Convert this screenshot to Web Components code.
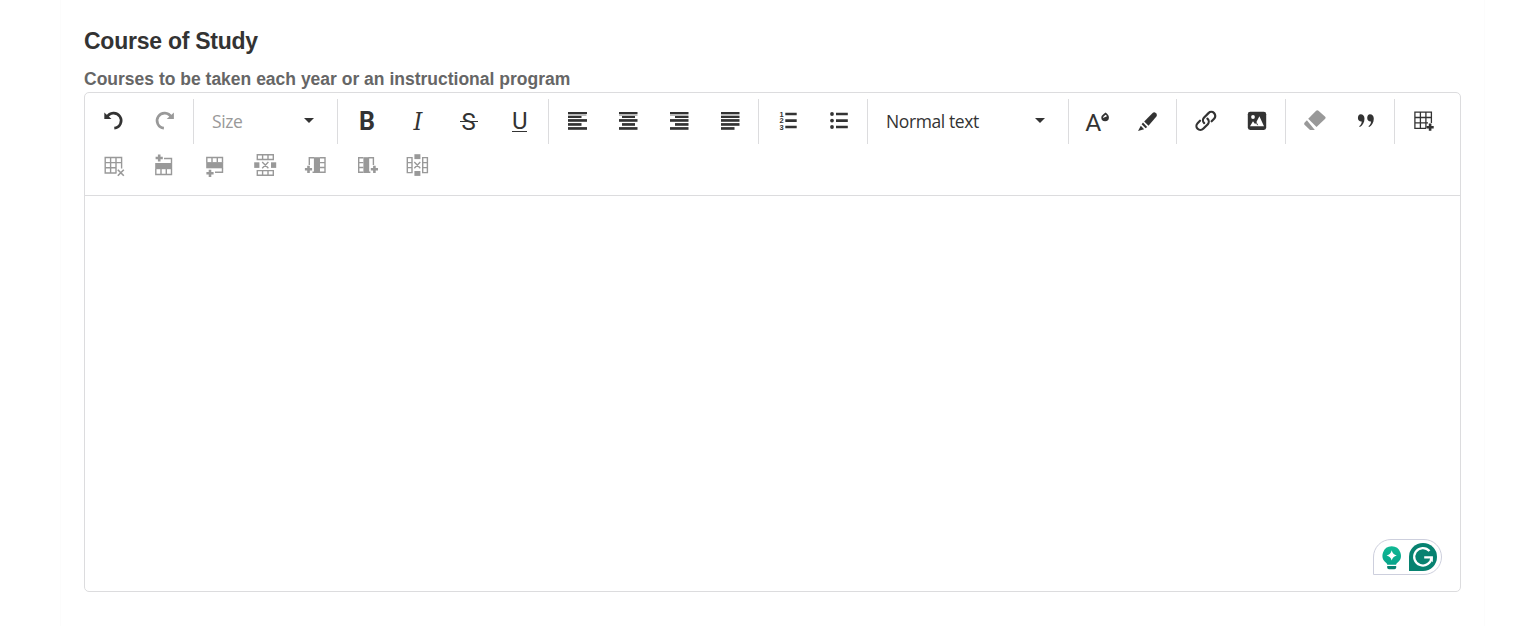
<!DOCTYPE html>
<html lang="en">
<head>
<meta charset="utf-8">
<title>Course of Study</title>
<style>
  body {
    margin: 0;
    background: #fff;
    font-family: "Liberation Sans", Arial, sans-serif;
  }
</style>
</head>
<body>
<editor-field heading="Course of Study" label="Courses to be taken each year or an instructional program">
  <editor-toolbar>
    <tool-group style="width:109px"><tool-button icon="undo"></tool-button><tool-button icon="redo" disabled></tool-button></tool-group>
    <tool-group style="width:144px"><tool-select disabled>Size</tool-select></tool-group>
    <tool-group style="width:211px">
      <tool-button icon="bold"></tool-button><tool-button icon="italic"></tool-button><tool-button icon="strike"></tool-button><tool-button icon="underline"></tool-button>
    </tool-group>
    <tool-group style="width:210px">
      <tool-button icon="left"></tool-button><tool-button icon="center"></tool-button><tool-button icon="right"></tool-button><tool-button icon="justify"></tool-button>
    </tool-group>
    <tool-group style="width:109px"><tool-button icon="ordered"></tool-button><tool-button icon="bullets"></tool-button></tool-group>
    <tool-group style="width:201px"><tool-select>Normal text</tool-select></tool-group>
    <tool-group style="width:108px"><tool-button icon="color"></tool-button><tool-button icon="marker"></tool-button></tool-group>
    <tool-group style="width:109px"><tool-button icon="link"></tool-button><tool-button icon="image"></tool-button></tool-group>
    <tool-group style="width:109px"><tool-button icon="eraser" disabled></tool-button><tool-button icon="quote"></tool-button></tool-group>
    <tool-group last style="width:58px"><tool-button icon="table"></tool-button></tool-group>
    <tool-group last style="width:361px;margin-top:-1px;padding-left:4px">
      <tool-button icon="tableDelete" disabled></tool-button><tool-button icon="rowAbove" disabled></tool-button><tool-button icon="rowBelow" disabled></tool-button><tool-button icon="rowDelete" disabled></tool-button><tool-button icon="colLeft" disabled></tool-button><tool-button icon="colRight" disabled></tool-button><tool-button icon="colDelete" disabled></tool-button>
    </tool-group>
  </editor-toolbar>
  <writing-assistant slot="overlay"></writing-assistant>
</editor-field>

<script>
const bars = (rows) =>
  `<rect x="3" y="5" width="18.5" height="2" fill="#bbb"/>` +
  rows.map(([x, w], i) => {
    const y = [3, 7, 10.1, 14.1, 18.1][i];
    return `<rect x="${x}" y="${y}" width="${w}" height="${i < 2 ? 2 : 2.7}"/>`;
  }).join("");

const plus = (x, y) => `<path d="M${x - 3.6} ${y}h7.2M${x} ${y - 3.6}v7.2" fill="none" stroke="currentColor" stroke-width="2.6"/>`;
const line = (d, w = 1.2) => `<path d="${d}" fill="none" stroke="currentColor" stroke-width="${w}"/>`;
const undo = line("M5 8.2A7.5 7.5 0 1 1 12.3 19.1", 2.6) + `<path d="M2.3 3.4v6.6h7.2z"/>`;

const ICONS = {
  undo,
  redo: `<g transform="matrix(-1 0 0 1 23.2 0)">${undo}</g>`,
  left: bars([[3, 19], [3, 13.5], [3, 19], [3, 13.5], [3, 19]]),
  center: bars([[3, 18.5], [6, 13], [3, 18.5], [6, 13], [3, 18.5]]),
  right: bars([[3, 18.5], [8, 13.5], [3, 18.5], [8, 13.5], [3, 18.5]]),
  justify: bars([[3, 18.5], [3, 18.5], [3, 18.5], [3, 18.5], [3, 13.5]]),
  ordered: line("M9.3 5h11.4M9.3 11.6h11.4M9.3 18h11.4", 2.6) +
    `<g font-family="Liberation Sans" font-weight="700" font-size="7.5"><text x="3.5" y="7.5">1</text><text x="3.5" y="14.2">2</text><text x="3.5" y="21">3</text></g>`,
  bullets: `<circle cx="5" cy="5" r="1.9"/><circle cx="5" cy="11.6" r="1.9"/><circle cx="5" cy="18" r="1.9"/>` +
    line("M9 5h11.8M9 11.6h11.8M9 18h11.8", 2.6),
  color: `<text x="0.2" y="21.6" font-family="Roboto" font-size="24.6">A</text>
    <path d="M20.6 3.6c2.2 1.8 3.3 3 3.3 4.8a3.8 3.8 0 0 1-7.6 0c0-1.8 2-3 4.3-4.8z"/>
    <path d="M18 9c0-1.6 1.6-2.2 2.6-3.2.8.6 1.2 1 1.4 1.4z" fill="#fff"/>`,
  marker: `<path d="M8.2 12.4 16.6 4q1.6-1.4 3.4.2 1.8 1.6.4 3.4L12.5 16.8z"/><path d="M7 13.6l4.2 4.3-1.6 1.4-4-4z"/><path d="M4.8 16.8l3.3 3.5L2 22z"/>`,
  link: `<g fill="none" stroke="currentColor" stroke-width="2.2" stroke-linecap="round">
    <path d="M10.2 14.1a3.9 3.9 0 0 1-.3-5.4l4.6-4.6a3.9 3.9 0 0 1 5.6 5.6l-2.5 2.6"/>
    <path d="M13.4 9.7a3.9 3.9 0 0 1 .4 5.5l-4.6 4.6a3.9 3.9 0 0 1-5.6-5.6l2.4-2.5"/></g>`,
  image: `<rect x="2.8" y="2.8" width="18.4" height="18.2" rx="2.4"/><circle cx="8" cy="8" r="1.9" fill="#fff"/>
    <path d="M5 17.3l3-5 2.2 3 4.2-8 4.6 10z" fill="#fff"/><path d="M10.5 12.2l2.2 4" stroke="currentColor" stroke-width=".9"/>`,
  eraser: `<path d="M13.1 1.7q1.2-1 2.4 0l6.7 6q1 1 0 2L13.5 18 5.2 9.8z"/><path d="M3.9 11.3 11.8 21H7L1.5 15.7q-.8-1 0-1.9z"/>`,
  quote: `<path id="mark" d="M6.6 5.3c2.4 0 3.9 1.7 3.9 4.5 0 3.9-2.1 6.7-4.6 8.3l-.8-.8c1.9-1.4 2.6-3 2.6-4.8-2.2.2-3.8-1.3-3.8-3.5 0-2.2 1.2-3.7 2.7-3.7z"/>
    <use href="#mark" x="9.3"/>`,
  table: line("M14 19.3H2.9V3.1h16.5v11M2.9 8.5h16.5M2.9 13.9H16M8.4 3.1v16.2M13.9 3.1v16.2", 1.3) + plus(18.1, 18.2),
  tableDelete: line("M14.5 20H3.2V4.5h16.4v11M3.2 9.6h16.4M3.2 14.8H14.5M8.6 4.5V20M14 4.5V20", 1.4) + line("M15.8 16.8l6 6M21.8 16.8l-6 6", 1.6),
  rowAbove: `<g transform="translate(-1 0)">` + plus(7.2, 5) + line("M12 5.5h7.5V10M3.8 16v5.5h15.7V16M9 16v5.5M14.3 16v5.5", 1.4) + `<rect x="3.2" y="10" width="17" height="6.2"/></g>`,
  rowBelow: plus(7, 20.3) + line("M12 19.2h7.5V15M3.8 9.5v-5h15.7v5M9 4.5v5M14.3 4.5v5", 1.4) + `<rect x="3.2" y="9.1" width="17" height="6.2"/>`,
  rowDelete: line("M4.3 1.8h16v4.7h-16zM9.6 1.8v4.7M15 1.8v4.7M4.3 17.6h16v4.7h-16zM9.6 17.6v4.7M15 17.6v4.7M9.2 9.1l6.2 6.2M15.4 9.1l-6.2 6.2", 1.4) +
    `<rect x="1.2" y="9.3" width="5.2" height="5.6"/><rect x="18" y="9.3" width="5.2" height="5.6"/>`,
  colLeft: plus(4.5, 16.3) + line("M5.3 12V4.8H10M8.5 19.3H10M16 4.8h5v14.5h-5M16 9.6h5M16 14.5h5", 1.4) + `<rect x="9.9" y="4.2" width="6.1" height="15.8"/>`,
  colRight: `<g transform="translate(1.4 0)">` + plus(19, 16.3) + line("M18 12V4.8H13M15 19.3H13M8 4.8H3.3v14.5H8M3.3 9.6H8M3.3 14.5H8", 1.4) + `<rect x="8" y="4.2" width="5.8" height="15.8"/></g>`,
  colDelete: line("M2.3 4.6H7v15H2.3zM2.3 9.6H7M2.3 14.6H7M17.7 4.6h4.7v15h-4.7zM17.7 9.6h4.7M17.7 14.6h4.7M9.3 9l6 6.2M15.3 9l-6 6.2", 1.4) +
    `<rect x="9.4" y="1.2" width="6" height="4.9"/><rect x="9.4" y="18" width="6" height="4.9"/>`,
};

// Text styles are drawn with their own letter.
const LETTERS = {
  bold: ["B", "font:700 25px/24px Roboto,sans-serif;padding-left:1px"],
  italic: ["I", "font:italic 25px/24px 'DejaVu Serif',serif;transform:scaleX(.9);padding-left:1px"],
  strike: ["S", "font:400 24px/24px Roboto,sans-serif"],
  underline: ["U", "font:400 24px/22px Roboto,sans-serif"],
};

class EditorField extends HTMLElement {
  constructor() {
    super();
    this.attachShadow({ mode: "open" });
  }

  connectedCallback() {
    this.shadowRoot.innerHTML = `
      <style>
        :host {
          display: flex;
          flex-direction: column;
          box-sizing: border-box;
          width: 1425px;
          height: 626px;
          margin-left: 60px;
          padding: 28px 23px 34px;
          border: solid #fcfcfc;
          border-width: 0 1px;
        }
        h2 {
          margin: 0;
          font-size: 23px;
          line-height: 27px;
          letter-spacing: -0.25px;
          color: #333;
        }
        label {
          margin-top: 13px;
          font-size: 17.5px;
          line-height: 22px;
          height: 24px;
          font-weight: 700;
          color: #666;
        }
        .editor {
          position: relative;
          flex: 1;
          display: flex;
          flex-direction: column;
          border: 1px solid #dcdcde;
          border-radius: 5px;
        }
        .content { flex: 1; }
      </style>
      <h2>${this.getAttribute("heading")}</h2>
      <label>${this.getAttribute("label")}</label>
      <div class="editor">
        <slot></slot>
        <div class="content"></div>
        <slot name="overlay"></slot>
      </div>
    `;
  }
}

class EditorToolbar extends HTMLElement {
  constructor() {
    super();
    this.attachShadow({ mode: "open" }).innerHTML = `
      <style>
        :host {
          display: flex;
          flex-wrap: wrap;
          align-content: flex-start;
          box-sizing: border-box;
          height: 103px;
          padding-top: 6px;
          border-bottom: 1px solid #dcdcde;
        }
      </style>
      <slot></slot>
    `;
  }
}

class ToolGroup extends HTMLElement {
  constructor() {
    super();
    this.attachShadow({ mode: "open" }).innerHTML = `
      <style>
        :host {
          display: flex;
          box-sizing: border-box;
          height: 45px;
          padding: 0 3px 1px;
          border-right: 1px solid #dcdcde;
        }
        :host([last]) { border-color: transparent; }
      </style>
      <slot></slot>
    `;
  }
}

class ToolButton extends HTMLElement {
  constructor() {
    super();
    this.attachShadow({ mode: "open" });
  }

  connectedCallback() {
    const name = this.getAttribute("icon");
    const letter = LETTERS[name];
    this.shadowRoot.innerHTML = `
      <style>
        :host {
          flex: 1;
          display: flex;
          justify-content: center;
          align-items: center;
          color: #333;
        }
        :host([disabled]) { color: #999; }
        svg {
          display: block;
          width: 24px;
          height: 24px;
          fill: currentColor;
          overflow: visible;
        }
        .letter {
          display: grid;
          place-items: center;
          height: 24px;
          margin-top: 2px;
        }
        .strike {
          background: linear-gradient(#333, #333) center 11px / 18px 1px no-repeat;
          width: 18px;
        }
        .underline {
          box-sizing: border-box;
          height: 22px;
          width: 15px;
          margin-top: 0;
          border-bottom: 1px solid #333;
        }
      </style>
      ${letter
        ? `<span class="letter ${name}" style="${letter[1]}">${letter[0]}</span>`
        : `<svg viewBox="0 0 24 24">${ICONS[name]}</svg>`}
    `;
  }
}

class ToolSelect extends HTMLElement {
  constructor() {
    super();
    this.attachShadow({ mode: "open" }).innerHTML = `
      <style>
        :host {
          flex: 1;
          display: flex;
          align-items: center;
          justify-content: space-between;
          padding: 0 20px 0 15px;
          font: 400 17.5px/24px "Open Sans", "Noto Sans", sans-serif;
          letter-spacing: -0.4px;
          color: #333;
        }
        :host([disabled]) { color: #999; }
        .caret {
          border: 5.5px solid transparent;
          border-top: 5px solid #333;
          border-bottom: 0;
          margin-bottom: 1px;
        }
      </style>
      <span><slot></slot></span>
      <i class="caret"></i>
    `;
  }
}

class WritingAssistant extends HTMLElement {
  constructor() {
    super();
    this.attachShadow({ mode: "open" }).innerHTML = `
      <style>
        :host {
          position: absolute;
          right: 18px;
          bottom: 16px;
          box-sizing: border-box;
          display: flex;
          align-items: center;
          gap: 6px;
          width: 69px;
          height: 36px;
          padding-left: 7px;
          background: #fff;
          border: 1px solid #cdcfdd;
          border-radius: 18px 18px 18px 0;
        }
        svg { display: block; }
      </style>
      <svg width="22" height="28" viewBox="0 0 22 28">
        <defs><linearGradient id="g" x2="0" y2="1"><stop stop-color="#10b894"/><stop offset="1" stop-color="#07a48b"/></linearGradient></defs>
        <path fill="url(#g)" d="M10.7 3.3a9.2 9.2 0 0 1 5.7 16.4c-.9.8-1.1 1.2-1.3 2H6.3c-.2-.8-.4-1.2-1.3-2a9.2 9.2 0 0 1 5.7-16.4z"/>
        <path fill="#fff" d="M10.7 7.2q1 4.2 5.1 5.2-4.1 1-5.1 5.2-1-4.2-5.1-5.2 4.1-1 5.1-5.2z"/>
        <path fill="#078372" d="M6.2 23h9v1.5q0 1.8-1.8 1.8H8q-1.8 0-1.8-1.8z"/>
      </svg>
      <svg width="28" height="28" viewBox="0 0 28 28">
        <path fill="#078270" d="M0 14a14 14 0 1 1 14 14H0z"/>
        <path fill="none" stroke="#fff" stroke-width="2.3" d="M20.5 8.1A8.7 8.7 0 1 0 22.6 14.4H15.2"/>
        <path fill="#fff" d="M23.8 13.3v5.9l-2.5-2.6z"/>
      </svg>
    `;
  }
}

customElements.define("editor-field", EditorField);
customElements.define("editor-toolbar", EditorToolbar);
customElements.define("tool-group", ToolGroup);
customElements.define("tool-button", ToolButton);
customElements.define("tool-select", ToolSelect);
customElements.define("writing-assistant", WritingAssistant);
</script>
</body>
</html>
